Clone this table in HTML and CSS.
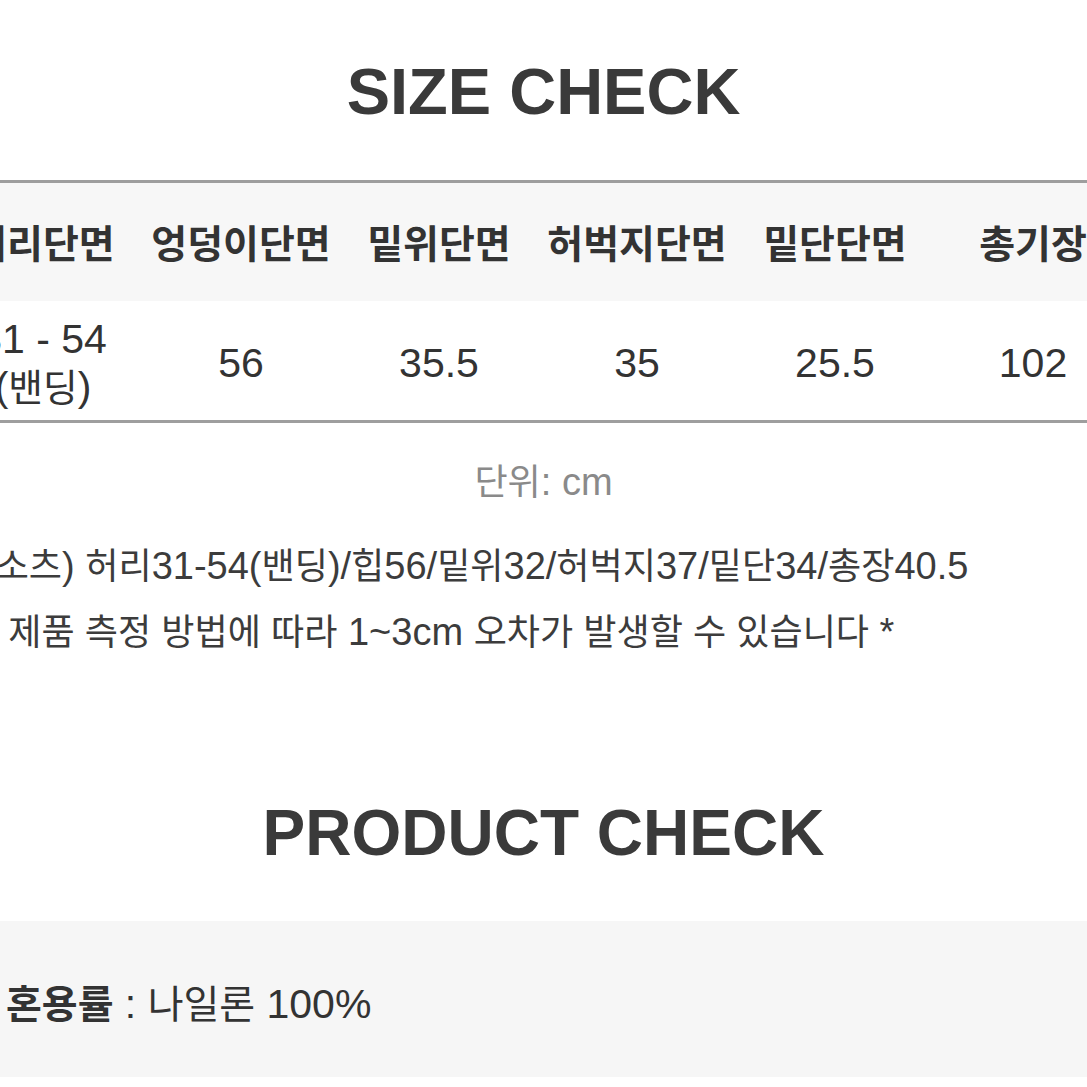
FILE: index.html
```html
<!DOCTYPE html>
<html lang="ko">
<head>
<meta charset="utf-8">
<title>SIZE CHECK</title>
<link rel="stylesheet" href="styles.css">
</head>
<body>
<main class="page">
  <h2 class="title">SIZE CHECK</h2>

  <div class="size-table">
    <div class="row head">
      <div class="cell">허리단면</div>
      <div class="cell">엉덩이단면</div>
      <div class="cell">밑위단면</div>
      <div class="cell">허벅지단면</div>
      <div class="cell">밑단단면</div>
      <div class="cell">총기장</div>
    </div>
    <div class="row body">
      <div class="cell stack"><span>31 - 54</span><span>(<span class="k">밴딩</span>)</span></div>
      <div class="cell">56</div>
      <div class="cell">35.5</div>
      <div class="cell">35</div>
      <div class="cell">25.5</div>
      <div class="cell">102</div>
    </div>
  </div>

  <p class="unit"><span class="k">단위</span>: cm</p>

  <div class="notes">
    <p>(<span class="k">소츠</span>) <span class="k">허리</span>31-54(<span class="k">밴딩</span>)/<span class="k">힙</span>56/<span class="k">밑위</span>32/<span class="k">허벅지</span>37/<span class="k">밑단</span>34/<span class="k">총장</span>40.5</p>
    <p>* <span class="k">제품 측정 방법에 따라</span> 1~3cm <span class="k">오차가 발생할 수 있습니다</span> *</p>
  </div>

  <h2 class="title title-product">PRODUCT CHECK</h2>

  <div class="product">
    <p><strong class="k">혼용률</strong> : <span class="k">나일론</span> 100%</p>
  </div>
</main>
</body>
</html>
```

FILE: styles.css
```css
html, body {
  margin: 0;
  padding: 0;
  background: #ffffff;
}

body {
  width: 1087px;
  height: 1087px;
  overflow: hidden;
  font-family: "Liberation Sans", "Noto Sans CJK KR", sans-serif;
  color: #333333;
}

.page {
  display: flex;
  flex-direction: column;
}

.k {
  font-family: "Noto Sans CJK KR", "Liberation Sans", sans-serif;
  font-size: 0.95em;
}

.title {
  margin: 54px 0 0;
  font-size: 65px;
  line-height: 76px;
  font-weight: 700;
  color: #3a3a3a;
  text-align: center;
}

.size-table {
  margin: 50px 0 0 -56px;
  width: 1188px;
  border-top: 3px solid #9e9e9e;
  border-bottom: 3px solid #9e9e9e;
}

.row {
  display: grid;
  grid-template-columns: repeat(6, 198px);
}

.cell {
  display: flex;
  align-items: center;
  justify-content: center;
  text-align: center;
}

.head {
  height: 118px;
  background: #f7f7f7;
}

.head .cell {
  font-family: "Noto Sans CJK KR", "Liberation Sans", sans-serif;
  font-size: 39px;
  font-weight: 700;
  color: #333333;
  padding-bottom: 2px;
}

.body {
  height: 119px;
}

.body .cell {
  font-size: 41px;
  line-height: 45px;
  color: #333333;
  padding-top: 6px;
}

.body .cell .k {
  font-size: 0.92em;
}

.cell.stack {
  flex-direction: column;
}

.unit {
  margin: 31px 0 0;
  font-size: 38px;
  line-height: 50px;
  color: #8a8a8a;
  text-align: center;
}

.notes {
  margin: 25px 0 0 -17px;
  font-size: 38px;
  line-height: 63px;
  color: #3c3c3c;
}

.notes p {
  margin: 0;
  white-space: nowrap;
}

.title-product {
  margin-top: 131px;
  font-size: 64px;
}

.product {
  margin-top: 50px;
  height: 156px;
  box-sizing: border-box;
  padding: 56px 0 0 6px;
  background: #f6f6f6;
}

.product p {
  margin: 0;
  font-size: 41px;
  line-height: 48px;
  color: #333333;
}

.product strong {
  font-weight: 700;
}
```
